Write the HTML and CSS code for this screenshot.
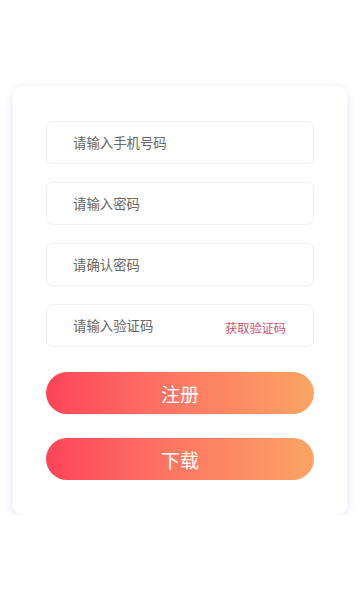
FILE: index.html
```html
<!DOCTYPE html>
<html lang="zh">
<head>
<meta charset="utf-8">
<meta name="viewport" content="width=device-width, initial-scale=1">
<link rel="stylesheet" href="styles.css">
<title>注册</title>
</head>
<body>
<div class="card">
  <div class="field"><span class="ph">请输入手机号码</span></div>
  <div class="field"><span class="ph">请输入密码</span></div>
  <div class="field"><span class="ph">请确认密码</span></div>
  <div class="field"><span class="ph">请输入验证码</span><span class="code">获取验证码</span></div>
  <div class="btn btn-first">注册</div>
  <div class="btn">下载</div>
</div>
</body>
</html>
```
FILE: styles.css
```css
html, body {
  margin: 0;
  padding: 0;
  background: #ffffff;
}
body {
  font-family: "Noto Sans CJK SC", "Noto Sans", sans-serif;
  padding-top: 86px;
}
.card {
  margin-left: 13px;
  width: 334px;
  box-sizing: border-box;
  padding: 35px 33px 35px;
  background: #fff;
  border-radius: 10px;
  box-shadow: 0 2px 10px rgba(120, 130, 235, 0.22);
  display: flex;
  flex-direction: column;
  gap: 18px;
}
.field {
  height: 43px;
  box-sizing: border-box;
  border: 1px solid #f1f1f3;
  border-radius: 6px;
  display: flex;
  align-items: center;
  justify-content: space-between;
  padding: 0 27px 0 26px;
}
.ph {
  font-size: 13.4px;
  color: #666666;
  margin-top: -2px;
}
.code {
  font-size: 12.2px;
  color: #d4506a;
  margin-top: 4px;
}
.btn {
  height: 42px;
  border-radius: 21px;
  background: linear-gradient(90deg, #fc4459 0%, #fd7563 45%, #fca463 100%);
  color: #fff;
  font-size: 19px;
  display: flex;
  align-items: center;
  justify-content: center;
  margin-top: 6px;
}
.btn-first {
  margin-top: 7px;
}
```
